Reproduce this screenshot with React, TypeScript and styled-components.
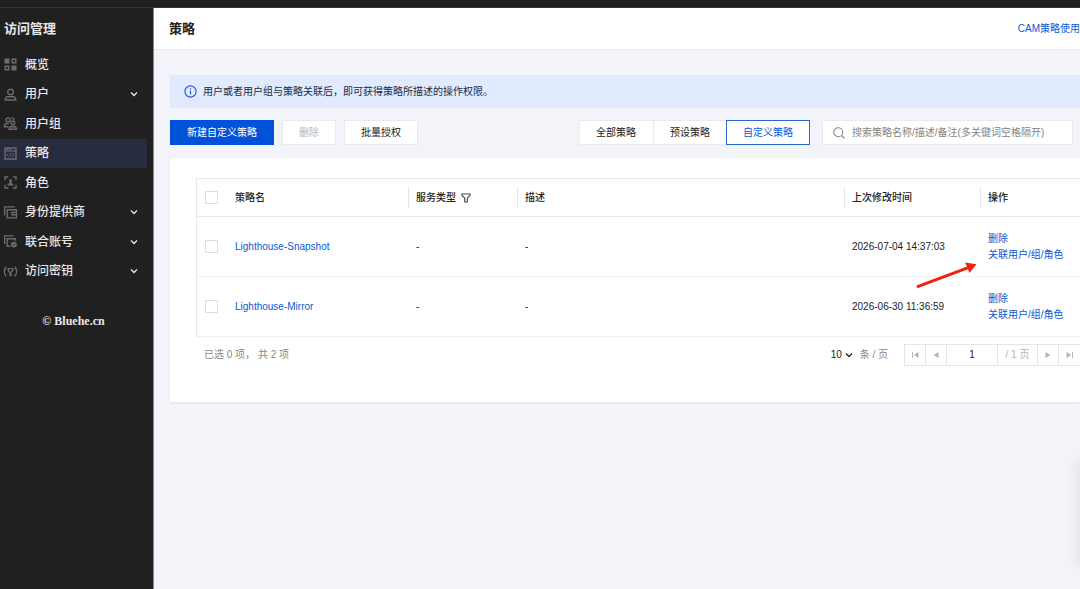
import React from "react";
import styled, { createGlobalStyle } from "styled-components";

const GlobalStyle = createGlobalStyle`
  * { box-sizing: border-box; }
  body {
    margin: 0;
    background: #f3f4f9;
    font-family: "Liberation Sans", "Noto Sans CJK SC", sans-serif;
    font-size: 10px;
    line-height: 16px;
    color: #222;
  }
  button, input, select { font: inherit; color: inherit; }
`;

const Page = styled.div`
  position: relative;
  display: flex;
  flex-direction: column;
  min-height: 100vh;
  overflow: hidden;
`;

const TopBar = styled.div`
  height: 8px;
  background: #202020;
  border-bottom: 1px solid #343434;
`;

const Body = styled.div`
  flex: 1;
  display: flex;
`;

const Sidebar = styled.aside`
  flex: 0 0 154px;
  padding-right: 6px;
  background: #202020;
  border-right: 1px solid #8a8a90;
  color: #e8e8e8;
`;

const SidebarTitle = styled.h2`
  margin: 0;
  padding-left: 4px;
  font-size: 13px;
  font-weight: 600;
  line-height: 42px;
`;

const Menu = styled.nav`
  display: grid;
  grid-auto-rows: 1fr;
  height: 236px;
`;

const MenuLink = styled.a<{ $active?: boolean }>`
  display: flex;
  align-items: center;
  gap: 8px;
  padding: 0 8px 0 4px;
  font-size: 12px;
  font-weight: 500;
  color: inherit;
  text-decoration: none;
  background: ${(p) => (p.$active ? "#272c40" : "transparent")};
`;

const MenuLabel = styled.span`
  flex: 1;
`;

const MenuIcon = styled.svg`
  width: 13px;
  height: 13px;
  fill: none;
  stroke: #6c6c6e;
  stroke-width: 1.4;
  overflow: visible;
`;

const Chevron = styled.svg`
  width: 10px;
  height: 10px;
  fill: none;
  stroke: currentColor;
  stroke-width: 1.3;
`;

const Credit = styled.p`
  margin: 27px 0 0;
  font-family: "Liberation Serif", serif;
  font-size: 12px;
  font-weight: 700;
  text-align: center;
`;

const Main = styled.main`
  flex: 1;
  min-width: 0;
`;

const Header = styled.header`
  display: flex;
  align-items: center;
  justify-content: space-between;
  height: 42px;
  padding-left: 15px;
  background: #fff;
  border-bottom: 1px solid #e6e8ee;
`;

const Title = styled.h1`
  margin: 0;
  font-size: 13px;
  font-weight: 600;
`;

const Link = styled.a`
  color: #0a5ad2;
  text-decoration: none;
`;

const Content = styled.div`
  padding: 25px 0 0 16px;
`;

const Notice = styled.div`
  display: flex;
  align-items: center;
  gap: 6px;
  height: 33px;
  padding-left: 14px;
  background: #e2eaff;
  color: #222b3d;
`;

const InfoIcon = styled.svg`
  width: 13px;
  height: 13px;
  fill: none;
  stroke: #2f62cf;
  stroke-width: 1.2;
`;

const Toolbar = styled.div`
  display: flex;
  justify-content: space-between;
  padding: 12px 7px 13px 0;
`;

const Group = styled.div<{ $gap?: number }>`
  display: flex;
  gap: ${(p) => p.$gap ?? 0}px;
`;

const tones = {
  plain: ["#fff", "#e8eaf0", "#222"],
  primary: ["#0052d9", "#0052d9", "#fff"],
  disabled: ["#fff", "#e8eaf0", "#b6b6b6"],
  outlined: ["#fff", "#2a67cf", "#0a5ad2"],
};

const Button = styled.button<{ $tone?: keyof typeof tones }>`
  height: 25px;
  padding: 0 16px;
  background: ${(p) => tones[p.$tone ?? "plain"][0]};
  border: 1px solid ${(p) => tones[p.$tone ?? "plain"][1]};
  color: ${(p) => tones[p.$tone ?? "plain"][2]};
`;

const Tabs = styled.div`
  display: flex;
`;

const Tab = styled(Button)`
  &:not(:last-child) { border-right-width: 0; }
  &:not(:last-child) { padding-right: 17px; }
  &:nth-last-child(2) { padding-right: 16px; }
`;

const Search = styled.label`
  display: flex;
  align-items: center;
  gap: 7px;
  width: 251px;
  height: 25px;
  padding-left: 10px;
  background: #fff;
  border: 1px solid #e8eaf0;
`;

const SearchIcon = styled.svg`
  width: 12px;
  height: 12px;
  fill: none;
  stroke: #888;
  stroke-width: 1.1;
`;

const SearchInput = styled.input`
  flex: 1;
  min-width: 0;
  padding: 0;
  border: 0;
  outline: 0;
  background: none;
  &::placeholder { color: #858585; opacity: 1; }
`;

const Card = styled.section`
  padding: 20px 0 36px 26px;
  background: #fff;
  box-shadow: 0 1px 2px rgba(40, 50, 80, 0.1);
`;

const Table = styled.table`
  width: 100%;
  table-layout: fixed;
  border-collapse: separate;
  border-spacing: 0;
  border: solid #e7e8ee;
  border-width: 1px 0 0 1px;
`;

const Col = styled.col<{ $width?: number }>`
  width: ${(p) => (p.$width ? `${p.$width}px` : "auto")};
`;

const HeadCell = styled.th`
  height: 38px;
  padding: 0;
  border-bottom: 1px solid #e7e8ee;
  font-weight: 500;
  text-align: left;
`;

const HeadLabel = styled.span<{ $divided?: boolean }>`
  display: flex;
  align-items: center;
  gap: 5px;
  height: 22px;
  padding-left: ${(p) => (p.$divided ? 7 : 8)}px;
  border-left: ${(p) => (p.$divided ? 1 : 0)}px solid #e7e8ee;
`;

const FilterIcon = styled.svg`
  width: 10px;
  height: 10px;
  fill: none;
  stroke: #444;
  stroke-width: 1.1;
`;

const Cell = styled.td`
  height: 60px;
  padding: 0 0 0 8px;
  border-bottom: 1px solid #eff0f3;
`;

const Checkbox = styled.input`
  appearance: none;
  display: block;
  width: 13px;
  height: 13px;
  margin: 0;
  border: 1px solid #dddee2;
  background: #fff;
  &:checked { background: #0052d9; }
`;

const Actions = styled.div`
  display: flex;
  flex-direction: column;
  align-items: flex-start;
  white-space: nowrap;
`;

const Footer = styled.footer`
  display: flex;
  align-items: center;
  justify-content: space-between;
  margin-top: 7px;
  padding-left: 8px;
  color: #888;
`;

const PageSize = styled.label`
  display: flex;
  align-items: center;
  gap: 6px;
  margin-right: 16px;
`;

const SelectBox = styled.span`
  display: grid;
  align-items: center;
  justify-items: end;
  color: #222;
  & > * { grid-area: 1 / 1; }
  & > svg { pointer-events: none; }
`;

const Select = styled.select`
  appearance: none;
  width: 23px;
  padding: 0;
  border: 0;
  background: none;
`;

const Pager = styled.div`
  display: flex;
  height: 22px;
  border: solid #e4e5ea;
  border-width: 1px 0 1px 1px;
`;

const PagerButton = styled.button`
  display: flex;
  align-items: center;
  justify-content: center;
  width: 21px;
  padding: 0;
  border: 0;
  background: none;
  color: #b5b5b5;
  &:not(:last-child) { border-right: 1px solid #e4e5ea; }
`;

const PagerGlyph = styled.svg`
  width: 8px;
  height: 8px;
  fill: currentColor;
`;

const PageInput = styled.input`
  width: 51px;
  padding: 0;
  border: 0;
  border-right: 1px solid #e4e5ea;
  text-align: center;
  color: #222;
`;

const PageTotal = styled.span`
  width: 40px;
  border-right: 1px solid #e4e5ea;
  line-height: 20px;
  text-align: center;
  color: #b5b5b5;
`;

const Arrow = styled.svg`
  position: absolute;
  left: 914px;
  top: 260px;
  width: 64px;
  height: 30px;
  pointer-events: none;
`;

const FloatingPanel = styled.div`
  position: absolute;
  left: 100%;
  bottom: 24px;
  width: 40px;
  height: 104px;
  box-shadow: 0 0 16px rgba(40, 40, 50, 0.12);
`;

const Down = () => (
  <Chevron viewBox="0 0 10 10" aria-hidden="true">
    <path d="M2 3.5 5 6.5 8 3.5" />
  </Chevron>
);

const menu: { label: string; icon: React.ReactNode; expands?: boolean; active?: boolean }[] = [
  {
    label: "概览",
    icon: (
      <>
        <path d="M.5.5h5v5h-5zM7.5 7.5h5v5h-5z" fill="#6c6c6e" stroke="none" />
        <path d="M8.2 1.2h3.6v3.6H8.2zM1.2 8.2h3.6v3.6H1.2z" />
      </>
    ),
  },
  {
    label: "用户",
    expands: true,
    icon: (
      <>
        <circle cx="6.5" cy="4" r="2.8" />
        <path d="M1.2 12v-1.2l1.7-2h7.2l1.7 2V12z" />
      </>
    ),
  },
  {
    label: "用户组",
    icon: (
      <>
        <circle cx="4" cy="2.9" r="2" />
        <path d="M4.6 9.8H.4V8.2l1.3-1.6h3M7.2 1.1c1.7-.3 3 .7 3 2.4" />
        <circle cx="8.8" cy="6.1" r="1.9" />
        <path d="M5.2 12.2v-1l1.3-1.5h4.6l1.3 1.5v1z" />
      </>
    ),
  },
  {
    label: "策略",
    active: true,
    icon: (
      <>
        <path d="M1 1h11v11H1zM1 3.9h11M3 2.4h1.2M5.4 2.4h1.2" />
        <path d="M4.4 6.3 2.9 8l1.5 1.7M8.6 6.3 10.1 8 8.6 9.7M7.2 6 5.8 10" strokeWidth="0.9" />
      </>
    ),
  },
  {
    label: "角色",
    icon: (
      <>
        <path d="M1 4.2V1h3.2M8.8 1H12v3.2M12 8.8V12H8.8M4.2 12H1V8.8" />
        <path d="M6.5 3.2a1.5 1.5 0 0 1 .8 2.8l.4 1.2 1.8.8v1.5h-6V8l1.8-.8.4-1.2a1.5 1.5 0 0 1 .8-2.8z" fill="#6c6c6e" stroke="none" />
      </>
    ),
  },
  {
    label: "身份提供商",
    expands: true,
    icon: <path d="M.6 9.5V.9h10.2M3.2 3.7h9.2v8.2H3.2zM12.2 6.4H8v2.4h4.2" />,
  },
  {
    label: "联合账号",
    expands: true,
    icon: (
      <>
        <path d="M.6 9V.9h8.8M6.4 11.3H3.2V3.7h8.2v2" />
        <circle cx="9.9" cy="9.6" r="2.9" fill="#6c6c6e" stroke="none" />
        <path d="m8.5 9.5 1 1 1.9-1.9" stroke="#202020" strokeWidth="0.9" />
      </>
    ),
  },
  {
    label: "访问密钥",
    expands: true,
    icon: (
      <path d="M2.2 1.8C-.1 4.7-.1 8.3 2.2 11.2M10.8 1.8c2.3 2.9 2.3 6.5 0 9.4M4.3 3.6h4.4v2.2L7.5 7.1h-2L4.3 5.8zM6.3 7v4.2M6.3 9.8h1.9" />
    ),
  },
];

const policies = [
  { name: "Lighthouse-Snapshot", modified: "2026-07-04 14:37:03" },
  { name: "Lighthouse-Mirror", modified: "2026-06-30 11:36:59" },
];

export default function App() {
  return (
    <Page>
      <GlobalStyle />
      <TopBar />
      <Body>
        <Sidebar>
          <SidebarTitle>访问管理</SidebarTitle>
          <Menu>
            {menu.map((item) => (
              <MenuLink key={item.label} href="#" $active={item.active}>
                <MenuIcon viewBox="0 0 13 13" aria-hidden="true">{item.icon}</MenuIcon>
                <MenuLabel>{item.label}</MenuLabel>
                {item.expands && <Down />}
              </MenuLink>
            ))}
          </Menu>
          <Credit>© Bluehe.cn</Credit>
        </Sidebar>
        <Main>
          <Header>
            <Title>策略</Title>
            <Link href="#">CAM策略使用</Link>
          </Header>
          <Content>
            <Notice>
              <InfoIcon viewBox="0 0 13 13" aria-hidden="true">
                <circle cx="6.5" cy="6.5" r="5.6" />
                <path d="M6.5 5.6v4M6.5 3.3v1.3" />
              </InfoIcon>
              用户或者用户组与策略关联后，即可获得策略所描述的操作权限。
            </Notice>
            <Toolbar>
              <Group $gap={8}>
                <Button $tone="primary">新建自定义策略</Button>
                <Button $tone="disabled" disabled>删除</Button>
                <Button>批量授权</Button>
              </Group>
              <Group $gap={12}>
                <Tabs>
                  <Tab>全部策略</Tab>
                  <Tab>预设策略</Tab>
                  <Tab $tone="outlined">自定义策略</Tab>
                </Tabs>
                <Search>
                  <SearchIcon viewBox="0 0 12 12" aria-hidden="true">
                    <circle cx="5.2" cy="5.2" r="4.5" />
                    <path d="m8.5 8.5 3 3" />
                  </SearchIcon>
                  <SearchInput aria-label="搜索" placeholder="搜索策略名称/描述/备注(多关键词空格隔开)" />
                </Search>
              </Group>
            </Toolbar>
            <Card>
              <Table>
                <colgroup>
                  <Col $width={30} />
                  <Col $width={181} />
                  <Col $width={109} />
                  <Col />
                  <Col $width={136} />
                  <Col $width={100} />
                </colgroup>
                <thead>
                  <tr>
                    <HeadCell>
                      <HeadLabel><Checkbox type="checkbox" aria-label="全选" /></HeadLabel>
                    </HeadCell>
                    <HeadCell><HeadLabel>策略名</HeadLabel></HeadCell>
                    <HeadCell>
                      <HeadLabel $divided>
                        服务类型
                        <FilterIcon viewBox="0 0 10 10" aria-hidden="true">
                          <path d="M.9 1h8.2v1.3L6.3 5v4H3.7V5L.9 2.3z" />
                        </FilterIcon>
                      </HeadLabel>
                    </HeadCell>
                    <HeadCell><HeadLabel $divided>描述</HeadLabel></HeadCell>
                    <HeadCell><HeadLabel $divided>上次修改时间</HeadLabel></HeadCell>
                    <HeadCell><HeadLabel $divided>操作</HeadLabel></HeadCell>
                  </tr>
                </thead>
                <tbody>
                  {policies.map((policy) => (
                    <tr key={policy.name}>
                      <Cell><Checkbox type="checkbox" aria-label={policy.name} /></Cell>
                      <Cell><Link href="#">{policy.name}</Link></Cell>
                      <Cell>-</Cell>
                      <Cell>-</Cell>
                      <Cell>{policy.modified}</Cell>
                      <Cell>
                        <Actions>
                          <Link href="#">删除</Link>
                          <Link href="#">关联用户/组/角色</Link>
                        </Actions>
                      </Cell>
                    </tr>
                  ))}
                </tbody>
              </Table>
              <Footer>
                <span>已选 0 项， 共 2 项</span>
                <Group>
                  <PageSize>
                    <SelectBox>
                      <Select defaultValue="10"><option>10</option></Select>
                      <Down />
                    </SelectBox>
                    条 / 页
                  </PageSize>
                  <Pager>
                    <PagerButton aria-label="首页">
                      <PagerGlyph viewBox="0 0 8 8"><path d="M1 1h1v6H1zM7.5 1v6L2.8 4z" /></PagerGlyph>
                    </PagerButton>
                    <PagerButton aria-label="上一页">
                      <PagerGlyph viewBox="0 0 8 8"><path d="M6.5 1v6L1.5 4z" /></PagerGlyph>
                    </PagerButton>
                    <PageInput aria-label="页码" defaultValue="1" />
                    <PageTotal>/ 1 页</PageTotal>
                    <PagerButton aria-label="下一页">
                      <PagerGlyph viewBox="0 0 8 8"><path d="M1.5 1v6l5-3z" /></PagerGlyph>
                    </PagerButton>
                    <PagerButton aria-label="末页">
                      <PagerGlyph viewBox="0 0 8 8"><path d="M6 1h1v6H6zM.5 1v6l4.7-3z" /></PagerGlyph>
                    </PagerButton>
                  </Pager>
                </Group>
              </Footer>
            </Card>
          </Content>
        </Main>
      </Body>
      <Arrow viewBox="0 0 64 30" aria-hidden="true">
        <path d="M2.4 25.6 53 6.6 51 2.5 62.5 4.2 55.4 13 54.1 9.3 3.5 28.3Z" fill="#f0210f" />
      </Arrow>
      <FloatingPanel />
    </Page>
  );
}
